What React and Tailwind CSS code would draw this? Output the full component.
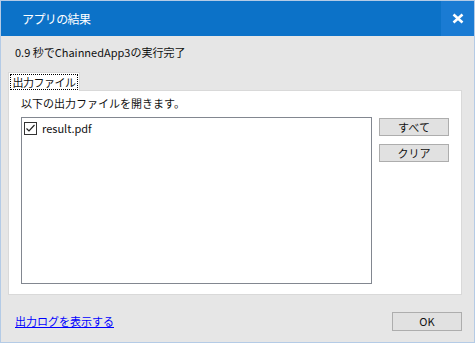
import { useState } from 'react';

const font = { fontFamily: '"Noto Sans CJK JP", "Noto Sans", sans-serif' };

const App = () => {
  const [checked, setChecked] = useState(true);

  return (
    <div
      className="w-[475px] h-[343px] border border-[#b4cbe6] bg-[#e6e6e6] flex flex-col text-[11px] text-[#111]"
      style={font}
    >
      {/* Title bar */}
      <div className="h-[35px] bg-[#0c72c8] flex items-center justify-between">
        <span className="pl-[21px] text-white text-[12px] tracking-[-0.6px]">アプリの結果</span>
        <button className="w-[33px] h-full bg-[#1a7bd3] flex items-center justify-center">
          <svg width="12" height="11" viewBox="0 0 12 11">
            <path d="M1.5 1.5 L10.5 9.5 M10.5 1.5 L1.5 9.5" stroke="#fff" strokeWidth="2.6" />
          </svg>
        </button>
      </div>

      <div className="pl-[14px] pt-[8px] leading-[16px] whitespace-nowrap">0.9 秒でChainnedApp3の実行完了</div>

      {/* Tabs */}
      <div className="mt-[12px] ml-[7px] mr-[12px] flex flex-col">
        <div className="relative z-10 -mb-px w-[72px] h-[19px] bg-white border border-b-0 border-[#d9d9d9] p-[1px]">
          <div className="h-full border border-dotted border-black flex items-center justify-center leading-none whitespace-nowrap tracking-[-0.5px]">
            出力ファイル
          </div>
        </div>
        <div className="h-[205px] bg-white border border-[#d9d9d9] pl-[12px] pt-[4px] flex flex-col">
          <div className="leading-[16px] whitespace-nowrap">以下の出力ファイルを開きます。</div>
          <div className="mt-[6px] flex gap-[7px]">
            <div className="w-[351px] h-[167px] border border-[#828790] bg-white px-[2px] py-[4px]">
              <label className="flex items-center gap-[5px] h-[13px]">
                <span
                  onClick={() => setChecked(!checked)}
                  className="w-[13px] h-[13px] border border-[#333] bg-white flex items-center justify-center"
                >
                  {checked && (
                    <svg width="11" height="11" viewBox="0 0 11 11">
                      <path d="M1.5 5.5 L4 8 L9.5 2" fill="none" stroke="#222" strokeWidth="1.2" />
                    </svg>
                  )}
                </span>
                <span className="leading-[13px]">result.pdf</span>
              </label>
            </div>
            <div className="flex flex-col gap-[8px] pt-[1px]">
              <button className="w-[70px] h-[18px] bg-[#e1e1e1] border border-[#adadad] leading-none">すべて</button>
              <button className="w-[70px] h-[18px] bg-[#e1e1e1] border border-[#adadad] leading-none">クリア</button>
            </div>
          </div>
        </div>
      </div>

      {/* Footer */}
      <div className="mt-[17px] pl-[14px] pr-[12px] flex items-center justify-between">
        <a href="#" className="text-[#0000ff] underline whitespace-nowrap">出力ログを表示する</a>
        <button className="w-[70px] h-[19px] bg-[#e1e1e1] border border-[#adadad] leading-none">OK</button>
      </div>
    </div>
  );
};

export default App;
